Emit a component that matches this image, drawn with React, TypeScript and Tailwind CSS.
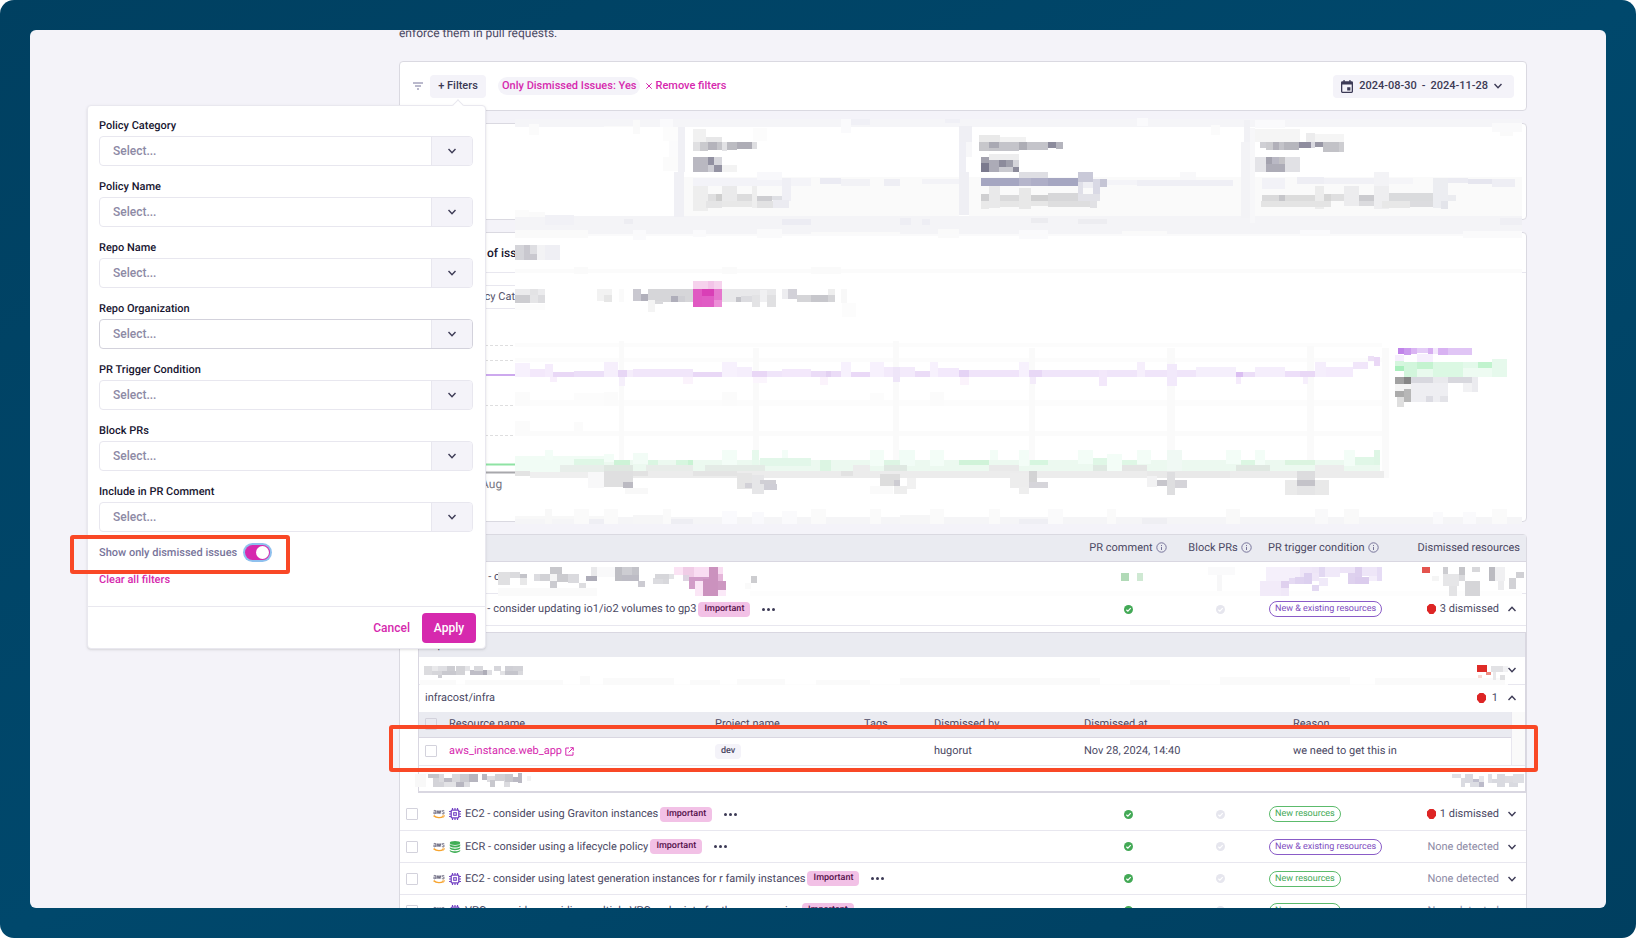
import { ReactNode } from 'react';
import { clsx } from 'clsx';

// x1, y1, x2, y2, fill
type Cell = [number, number, number, number, string];

const statCells: Cell[] = [
  [515, 119, 1522, 127, '#f5f5f8'], [529, 124, 539, 135, '#fbfbfb'], [604, 126, 633, 127, '#fafafa'], [633, 120, 640, 134, '#fafafa'],
  [660, 119, 673, 127, '#fafafc'], [663, 127, 678, 141, '#fcfcfc'], [669, 141, 678, 157, '#fbfbfc'], [663, 157, 678, 171, '#fbfbfb'],
  [851, 119, 870, 125, '#f0f0f6'], [841, 119, 851, 133, '#fafafc'], [945, 119, 960, 123, '#f0f0f6'], [1137, 118, 1148, 126, '#fafafc'],
  [1211, 125, 1220, 135, '#fbfbfb'], [1255, 120, 1285, 128, '#fafafc'], [1492, 123, 1522, 132, '#fafafb'], [1500, 132, 1513, 136, '#fafafa'],
  [684, 177, 959, 216, '#fafafa'], [969, 177, 1241, 216, '#fafafa'], [1255, 177, 1522, 216, '#fafafa'],
  [515, 216, 1522, 234, '#f4f4f7'], [515, 210, 529, 217, '#fbfbfb'], [529, 212, 545, 217, '#fafafa'], [545, 215, 574, 225, '#f1f1f6'],
  [624, 219, 633, 224, '#ededf2'], [782, 219, 811, 225, '#ececf3'], [900, 218, 911, 225, '#eeeef4'], [922, 219, 930, 225, '#eeeef4'],
  [1031, 218, 1048, 223, '#ececf0'], [1078, 219, 1107, 224, '#ededf1'], [1500, 218, 1522, 225, '#efeff4'],
  [515, 230, 588, 238, '#fafafa'], [633, 230, 646, 240, '#fafafc'], [693, 230, 706, 237, '#fafafc'], [757, 229, 782, 238, '#fafafb'],
  [811, 232, 900, 236, '#fafafa'], [938, 229, 959, 238, '#fafafa'], [1019, 230, 1048, 239, '#fafafc'], [1122, 231, 1167, 235, '#fafafa'],
  [1300, 230, 1330, 236, '#fafafc'], [1463, 231, 1522, 238, '#fafafb'], [588, 234, 1522, 236, '#fafafb'],
  [678, 127, 685, 172, '#f0f0f5'], [674, 172, 684, 217, '#f0f0f5'], [959, 126, 972, 142, '#efeff4'], [959, 142, 966, 172, '#efeff5'],
  [966, 142, 972, 157, '#f7f7f9'], [959, 172, 969, 215, '#efeff4'], [1244, 120, 1250, 142, '#f1f1f5'], [1241, 142, 1250, 218, '#f3f3f6'],
  [1250, 128, 1255, 223, '#f7f7f9'],
  [693, 129, 706, 142, '#f1f1f1'], [706, 137, 722, 142, '#e7e7e8'], [753, 128, 767, 141, '#fcfcfc'],
  [693, 142, 700, 151, '#e0e0e2'], [700, 142, 708, 151, '#cacace'], [708, 142, 717, 150, '#b4b3bb'], [717, 142, 722, 150, '#c5c5ca'],
  [722, 142, 727, 151, '#e2e2e5'], [727, 142, 737, 150, '#bcbcc2'], [737, 142, 752, 149, '#aeadb6'], [752, 142, 757, 149, '#dedee1'],
  [693, 157, 708, 172, '#b9b8c1'], [708, 157, 714, 165, '#9190a1'], [714, 157, 722, 165, '#d6d6dc'], [708, 165, 714, 172, '#cdcdd4'],
  [714, 165, 722, 172, '#9493a3'], [722, 165, 737, 172, '#f3f3f3'],
  [693, 178, 782, 186, '#f3f3f8'], [757, 172, 782, 180, '#f8f8fb'], [782, 178, 791, 201, '#efeff5'], [791, 178, 811, 186, '#f4f4f8'],
  [820, 178, 841, 184, '#ebebf3'], [841, 179, 870, 186, '#f2f2f6'], [884, 179, 900, 186, '#eeeef4'], [922, 179, 959, 184, '#f3f3f7'],
  [693, 186, 708, 211, '#eeeeee'], [708, 194, 716, 201, '#dfdfe0'], [716, 194, 722, 201, '#cecece'], [722, 186, 737, 201, '#eaeaeb'],
  [737, 194, 752, 201, '#dcdcdd'], [752, 186, 757, 208, '#eeeeee'], [757, 196, 772, 201, '#cdcdd1'], [772, 196, 782, 200, '#dedfe4'],
  [706, 201, 722, 208, '#e5e5e6'], [722, 201, 752, 207, '#e8e8e8'], [757, 201, 773, 208, '#e2e2e3'], [773, 200, 789, 208, '#ebebf1'],
  [979, 135, 1000, 142, '#e9e9e9'], [1000, 137, 1026, 142, '#f2f2f2'], [979, 142, 989, 151, '#c7c7cb'], [989, 142, 999, 148, '#a9a9b3'],
  [989, 148, 999, 151, '#c4c4c9'], [999, 142, 1019, 151, '#c4c4ca'], [1019, 142, 1027, 150, '#adadb5'], [1027, 142, 1048, 150, '#c4c4ca'],
  [1048, 142, 1056, 148, '#8c8b9c'], [1056, 142, 1063, 149, '#b4b4bd'],
  [989, 154, 1019, 160, '#ededee'], [981, 157, 989, 163, '#a3a2ae'], [981, 163, 989, 172, '#7b7a8e'], [989, 160, 999, 172, '#acabb7'],
  [999, 160, 1006, 167, '#8c8b9b'], [1006, 160, 1013, 167, '#9f9fab'], [999, 167, 1013, 172, '#cacad0'], [1013, 160, 1019, 167, '#d5d5da'],
  [1013, 167, 1019, 172, '#8b8a9a'], [1019, 172, 1048, 179, '#dedee3'],
  [981, 178, 1078, 186, '#a5a6c1'], [1019, 178, 1031, 186, '#b5b5cb'], [1031, 178, 1048, 186, '#aeaec7'], [1078, 172, 1093, 182, '#c9c9d8'],
  [1078, 182, 1083, 194, '#dfdfe8'], [1083, 182, 1093, 188, '#eeeef3'], [1093, 179, 1100, 194, '#d9d9e5'], [1100, 179, 1107, 187, '#c5c5d5'],
  [1107, 180, 1137, 185, '#f4f4f8'], [1137, 180, 1233, 186, '#efeff5'], [1180, 172, 1196, 180, '#f8f8fa'],
  [981, 194, 989, 201, '#cfcfd1'], [981, 201, 989, 209, '#e9e9e9'], [989, 186, 1000, 208, '#e9e9ea'], [1000, 195, 1019, 201, '#dadadb'],
  [1000, 201, 1019, 207, '#e6e6e6'], [1019, 188, 1031, 209, '#e8e8e8'], [1031, 195, 1048, 201, '#d0d0d1'], [1031, 201, 1048, 206, '#e6e6e6'],
  [1048, 193, 1078, 201, '#d7d7d9'], [1048, 201, 1090, 207, '#dededf'], [1078, 194, 1100, 201, '#e2e2e8'], [1090, 201, 1097, 208, '#e1e1e5'],
  [1255, 129, 1300, 142, '#f5f5f5'], [1306, 133, 1315, 142, '#ececed'], [1315, 134, 1344, 142, '#f5f5f5'],
  [1260, 142, 1266, 148, '#cfcfd4'], [1266, 142, 1273, 150, '#cbcbcf'], [1273, 142, 1279, 150, '#b1b0b9'], [1279, 142, 1284, 150, '#c3c3c9'],
  [1284, 142, 1299, 150, '#b6b6bd'], [1299, 142, 1311, 148, '#8f8d9f'], [1311, 142, 1315, 148, '#d8d8df'], [1315, 142, 1323, 147, '#9897a5'],
  [1323, 142, 1339, 152, '#c2c2c7'], [1339, 142, 1344, 152, '#cdcdd1'],
  [1255, 157, 1266, 172, '#e4e4e8'], [1266, 157, 1272, 164, '#a3a2ae'], [1272, 157, 1279, 164, '#b9b8c4'], [1279, 157, 1285, 164, '#c3c2c6'],
  [1266, 164, 1285, 172, '#adacb7'], [1285, 157, 1300, 172, '#e1e1e5'],
  [1262, 178, 1285, 189, '#f2f2f7'], [1297, 177, 1324, 184, '#eeeef4'], [1324, 178, 1374, 184, '#f1f1f6'], [1374, 172, 1389, 186, '#f3f3f6'],
  [1389, 178, 1413, 184, '#f5f5f8'], [1433, 178, 1448, 208, '#ecedf1'], [1448, 178, 1468, 183, '#ebebf2'], [1468, 179, 1492, 184, '#e6e6ef'],
  [1492, 179, 1515, 187, '#eeeef4'],
  [1262, 195, 1279, 201, '#dadadb'], [1279, 195, 1285, 201, '#c6c6ca'], [1285, 195, 1315, 201, '#dcdcdc'], [1315, 186, 1324, 209, '#ececec'],
  [1324, 194, 1331, 201, '#d6d6d6'], [1331, 194, 1344, 201, '#dfdfe0'], [1344, 186, 1359, 206, '#ececee'], [1359, 195, 1374, 201, '#cbcbcf'],
  [1359, 201, 1374, 206, '#dbdbde'], [1374, 186, 1389, 209, '#eeeef0'], [1389, 193, 1433, 201, '#dadbdd'], [1261, 201, 1331, 207, '#e4e4e4'],
  [1382, 201, 1410, 208, '#e8e8e8'], [1410, 201, 1433, 207, '#dcdcdf'], [1441, 201, 1448, 209, '#e3e4ea'], [1448, 195, 1456, 201, '#ebecf0'],
];

const chartCells: Cell[] = [
  [515, 245, 524, 260, '#d5d5da'], [524, 245, 530, 260, '#c9c8cf'], [530, 245, 537, 254, '#dedee2'], [530, 254, 537, 260, '#c9c8cf'],
  [537, 245, 545, 260, '#f3f3f5'], [545, 245, 560, 260, '#efeff4'],
  [515, 269, 1522, 273, '#fbfbfb'], [574, 267, 588, 274, '#fafafa'], [722, 267, 737, 274, '#fafafa'], [811, 267, 841, 274, '#fafafa'],
  [515, 289, 545, 296, '#ebebed'], [515, 295, 530, 303, '#cdcdd1'], [530, 289, 538, 295, '#e3e3e5'], [530, 295, 538, 303, '#e5e5e7'],
  [538, 295, 545, 303, '#dcdcdf'], [597, 289, 612, 301, '#f2f2f2'], [604, 295, 612, 302, '#e6e6e6'], [619, 289, 624, 302, '#fafafa'],
  [633, 289, 641, 301, '#c9c8d0'], [641, 294, 648, 301, '#b1b0bb'], [648, 289, 693, 302, '#d6d6d9'], [655, 301, 663, 304, '#d9d9dc'],
  [648, 300, 655, 312, '#f4f4f4'], [671, 296, 678, 302, '#afaeba'], [678, 296, 685, 302, '#cfcfd4'],
  [693, 281, 722, 289, '#f6d2ed'], [708, 281, 714, 289, '#f3c3e8'], [693, 289, 702, 307, '#e059c2'], [702, 289, 714, 296, '#d93fb6'],
  [702, 296, 714, 307, '#e05cc4'], [714, 289, 722, 300, '#e576cd'], [714, 300, 722, 307, '#ec8fd7'],
  [722, 289, 776, 302, '#e8e8ea'], [736, 297, 741, 302, '#c3c3c9'], [741, 296, 752, 302, '#dcdce0'], [752, 295, 760, 307, '#e3e3e5'],
  [760, 290, 767, 302, '#f0f0f2'], [767, 295, 776, 307, '#e0e0e2'], [782, 289, 788, 299, '#ededf0'], [788, 289, 797, 299, '#d2d1d8'],
  [797, 295, 835, 302, '#d5d5d8'], [811, 295, 828, 302, '#c7c7cc'], [828, 289, 835, 295, '#eeeeee'], [841, 289, 847, 303, '#f8f8f8'],
  [842, 303, 856, 317, '#fcfcfc'], [515, 304, 545, 310, '#fcfcfc'],
  [515, 343, 1382, 347, '#fcfcfc'], [515, 358, 1382, 362, '#fcfcfc'], [515, 400, 1382, 406, '#fcfcfc'], [515, 431, 1382, 436, '#fbfbfb'],
  [515, 392, 530, 406, '#fbfbfb'], [574, 393, 604, 406, '#fcfcfc'], [604, 392, 618, 406, '#fbfbfb'], [722, 392, 737, 406, '#fbfbfb'],
  [870, 393, 884, 406, '#fcfcfc'], [930, 392, 944, 406, '#fbfbfb'], [515, 421, 530, 436, '#fbfbfb'], [574, 422, 583, 436, '#fbfbfb'],
  [619, 341, 624, 465, '#fafafa'], [753, 348, 759, 465, '#fafafa'], [893, 341, 899, 465, '#fafafa'], [1029, 348, 1035, 465, '#fafafa'],
  [1167, 348, 1175, 465, '#fafafa'], [1307, 346, 1314, 465, '#fafafa'], [1382, 348, 1389, 478, '#fafafa'],
  [515, 363, 530, 377, '#f7f1fd'], [530, 369, 545, 377, '#f3e8fb'], [545, 364, 553, 377, '#f5ecfc'], [553, 372, 574, 377, '#e9d8f6'],
  [550, 377, 557, 382, '#f8effc'], [574, 371, 604, 377, '#ecdff8'], [604, 362, 618, 377, '#f6effc'], [618, 370, 627, 377, '#e7d6f5'],
  [619, 377, 625, 386, '#f5effb'], [627, 370, 633, 377, '#f5edfb'], [633, 369, 693, 377, '#f1e6fa'], [683, 377, 693, 384, '#fbf3fc'],
  [693, 372, 722, 377, '#e9d8f6'], [722, 362, 737, 377, '#f7f1fd'], [737, 367, 752, 377, '#f5eefc'], [752, 371, 767, 377, '#e9d7f6'],
  [753, 377, 767, 383, '#fbf5fd'], [767, 371, 782, 377, '#f0e5fa'], [782, 369, 811, 377, '#f3e8fb'], [811, 371, 841, 377, '#ebdcf7'],
  [826, 371, 831, 377, '#e3d1f2'], [820, 377, 828, 385, '#fbf3fc'], [841, 362, 851, 377, '#f7f1fd'], [851, 372, 870, 377, '#ead9f7'],
  [870, 362, 884, 377, '#f7f1fd'], [884, 367, 915, 377, '#f3eafb'], [893, 367, 900, 382, '#eee5f8'], [915, 371, 930, 377, '#ebdcf7'],
  [930, 362, 938, 377, '#f7f1fd'], [938, 368, 959, 377, '#f3e9fc'], [959, 370, 969, 377, '#e5d3f5'], [960, 377, 969, 385, '#fbf3fc'],
  [969, 370, 1019, 377, '#f0e4fa'], [1019, 362, 1029, 377, '#f7f1fd'], [1029, 370, 1042, 377, '#e8d8f6'], [1030, 377, 1036, 384, '#f3ebfa'],
  [1042, 370, 1137, 377, '#f0e5fa'], [1099, 370, 1107, 386, '#f3e8fb'], [1137, 362, 1145, 377, '#f6effc'], [1145, 370, 1196, 377, '#f0e5fa'],
  [1167, 364, 1177, 386, '#f2e9fb'], [1196, 367, 1236, 377, '#f5effc'], [1236, 372, 1243, 377, '#dbbff2'], [1236, 377, 1241, 384, '#f5ebfc'],
  [1243, 372, 1255, 377, '#ecdef8'], [1255, 367, 1285, 377, '#f5eefc'], [1285, 371, 1300, 377, '#eddff9'], [1300, 371, 1315, 377, '#e9d8f6'],
  [1303, 377, 1308, 384, '#f6effc'], [1315, 362, 1326, 377, '#f5eefc'], [1326, 367, 1353, 377, '#f4ebfc'], [1353, 362, 1368, 369, '#f1e6fa'],
  [1368, 356, 1374, 361, '#ecdff6'], [1374, 357, 1380, 366, '#ead8f6'],
  [515, 456, 604, 472, '#f1fcf5'], [604, 460, 1380, 472, '#ecf9f0'], [545, 450, 553, 460, '#f3fdf7'], [604, 454, 614, 462, '#f3fdf7'],
  [633, 453, 648, 464, '#f2fcf6'], [722, 450, 737, 466, '#f3fdf7'], [752, 450, 759, 472, '#e7f9ed'], [782, 450, 788, 460, '#f3fdf7'],
  [870, 450, 884, 466, '#f3fdf7'], [899, 450, 915, 466, '#f1fcf6'], [930, 450, 944, 466, '#f3fdf7'], [990, 450, 998, 460, '#f3fdf7'],
  [1019, 450, 1029, 466, '#f3fdf7'], [1078, 450, 1093, 464, '#f3fdf7'], [1107, 454, 1122, 472, '#f3fdf7'], [1137, 450, 1151, 464, '#f3fdf7'],
  [1167, 450, 1182, 472, '#f0f9f4'], [1226, 450, 1241, 464, '#f3fdf7'], [1255, 450, 1265, 466, '#f3fdf7'], [1344, 450, 1355, 466, '#f3fdf7'],
  [574, 459, 604, 465, '#dff7e6'], [614, 460, 630, 465, '#cdf3d7'], [648, 460, 658, 465, '#daf6e2'], [676, 460, 693, 465, '#d6f6df'],
  [688, 460, 693, 471, '#c8f3d3'], [760, 458, 811, 466, '#e2f7e9'], [820, 460, 831, 471, '#dcf5e3'], [884, 460, 900, 466, '#ddf5e4'],
  [959, 460, 989, 465, '#d0f3d9'], [1030, 460, 1048, 465, '#d6f6df'], [1093, 458, 1107, 465, '#dff7e6'], [1122, 460, 1137, 465, '#def7e5'],
  [1241, 460, 1255, 465, '#dcf7e3'], [1285, 460, 1315, 465, '#dbf4e0'], [1355, 457, 1380, 465, '#e0f7e7'], [1374, 450, 1380, 465, '#def6e5'],
  [560, 465, 604, 472, '#e8eeea'], [604, 465, 633, 472, '#dfe7e1'], [646, 465, 693, 472, '#e8ece9'], [705, 465, 765, 472, '#e4ebe6'],
  [853, 465, 870, 472, '#ececec'], [884, 465, 907, 472, '#dfe8e2'], [989, 465, 1019, 472, '#e9e9e9'], [1093, 465, 1107, 472, '#dfe9e2'],
  [1122, 465, 1147, 472, '#e4e5e4'], [1236, 465, 1270, 472, '#e0e8e2'], [1315, 465, 1344, 472, '#ececec'],
  [515, 471, 530, 476, '#e3e3e3'], [530, 472, 604, 478, '#efefef'], [604, 471, 1384, 478, '#ececec'], [633, 471, 648, 476, '#e2e2e2'],
  [693, 471, 737, 476, '#e4e4e4'], [841, 471, 853, 476, '#e2e2e2'], [1147, 471, 1230, 478, '#e9e9e9'],
  [588, 472, 604, 488, '#f8f8f9'], [604, 471, 633, 487, '#dfdfe0'], [623, 482, 633, 488, '#bbbac2'], [625, 488, 648, 494, '#f8f8f8'],
  [737, 473, 752, 489, '#e5e5e5'], [745, 483, 752, 488, '#d2d1d7'], [752, 475, 764, 494, '#e6e6e8'], [760, 480, 776, 484, '#d0cfd5'],
  [764, 484, 777, 490, '#cfced6'], [880, 474, 900, 486, '#dddddd'], [894, 480, 900, 486, '#cdccd2'], [894, 486, 907, 494, '#eeeeee'],
  [907, 478, 916, 489, '#f1f1f1'], [870, 486, 893, 494, '#fafafa'], [1010, 473, 1029, 488, '#ededed'], [1029, 471, 1037, 482, '#d3d3d4'],
  [1029, 482, 1048, 488, '#d6d5da'], [1019, 487, 1029, 494, '#eeeeee'], [1147, 476, 1157, 487, '#f2f2f3'], [1157, 480, 1167, 486, '#c7c6cc'],
  [1167, 472, 1175, 495, '#dedee0'], [1175, 480, 1187, 488, '#d5d4d9'], [1285, 480, 1297, 495, '#eaeaea'], [1297, 471, 1315, 480, '#dcdcde'],
  [1297, 480, 1315, 486, '#c4c3c9'], [1297, 486, 1315, 495, '#e5e5e6'], [1315, 480, 1329, 495, '#e9e9e9'],
  [515, 517, 1522, 524, '#f5f5f7'], [515, 516, 604, 519, '#f8f8f8'], [545, 509, 552, 524, '#f8f8f8'], [574, 509, 589, 524, '#fafafa'],
  [589, 519, 604, 524, '#efeff4'], [604, 509, 618, 524, '#fafafa'], [633, 515, 663, 524, '#f6f6f7'], [663, 509, 671, 524, '#fafafa'],
  [671, 519, 693, 524, '#eeeef3'], [722, 511, 737, 524, '#fafafd'], [752, 512, 764, 524, '#f9f9fc'], [782, 511, 797, 524, '#fafafc'],
  [811, 509, 826, 524, '#fafafa'], [870, 509, 881, 524, '#fafafa'], [900, 515, 930, 524, '#f6f6f7'], [930, 509, 944, 524, '#fafafa'],
  [989, 509, 1000, 524, '#fafafa'], [1019, 519, 1048, 524, '#efeff4'], [1048, 509, 1063, 524, '#fafafb'], [1107, 509, 1116, 524, '#fafafa'],
  [1142, 518, 1167, 524, '#efeff3'], [1226, 509, 1240, 524, '#f9f9f9'], [1315, 509, 1328, 524, '#f9f9fa'], [1344, 509, 1359, 524, '#f9f9f9'],
  [1433, 512, 1443, 524, '#fafafc'], [1463, 512, 1476, 524, '#fafafc'], [1492, 509, 1507, 524, '#fafafa'],
  [1398, 348, 1404, 354, '#c084ea'], [1404, 348, 1411, 355, '#cb9aee'], [1411, 348, 1417, 354, '#dab5f3'], [1417, 348, 1433, 353, '#e4ccf7'],
  [1428, 348, 1433, 354, '#d6aef1'], [1433, 348, 1438, 354, '#f3e8fc'], [1438, 348, 1448, 355, '#d8b2f2'], [1448, 348, 1472, 355, '#e0c5f5'],
  [1395, 355, 1404, 361, '#f6effd'], [1417, 354, 1433, 362, '#f6effd'],
  [1395, 361, 1404, 366, '#d5f6de'], [1395, 366, 1404, 371, '#a9efbd'], [1404, 362, 1417, 377, '#d2f6dc'], [1417, 362, 1433, 369, '#c4f3d0'],
  [1417, 369, 1433, 377, '#e9faee'], [1433, 362, 1463, 377, '#dbf8e3'], [1463, 368, 1492, 377, '#eefbf2'], [1463, 362, 1478, 368, '#e3f9ea'],
  [1478, 362, 1492, 368, '#c1f3ce'], [1492, 359, 1507, 377, '#e6f9ec'],
  [1395, 377, 1404, 384, '#a1a1a1'], [1404, 377, 1411, 384, '#868686'], [1411, 377, 1433, 383, '#d8d8df'], [1433, 377, 1448, 383, '#e9e9ed'],
  [1448, 377, 1472, 383, '#d8d8de'], [1472, 377, 1478, 392, '#ebebef'], [1395, 384, 1411, 391, '#f4f4f4'], [1395, 391, 1404, 397, '#ababab'],
  [1404, 389, 1411, 402, '#b7b7b7'], [1397, 397, 1404, 407, '#dfdfdf'], [1411, 383, 1448, 402, '#eeeef2'], [1426, 396, 1433, 402, '#dcdce3'],
  [1440, 396, 1448, 402, '#e3e3e8'], [1463, 383, 1472, 392, '#f2f2f4'],
];

const policyCells: Cell[] = [
  [498, 566, 750, 597, '#ffffff'],
  [498, 572, 510, 586, '#e0e0e2'], [510, 572, 520, 579, '#dbdbde'], [520, 574, 527, 579, '#c4c4ca'], [520, 579, 527, 586, '#e8e8e9'],
  [534, 574, 540, 582, '#dcdce0'], [540, 574, 550, 582, '#d2d2d6'], [550, 567, 562, 574, '#c8c8cc'], [557, 574, 568, 583, '#cbcbcf'],
  [550, 582, 557, 589, '#cbcbd0'], [568, 574, 579, 584, '#dadade'], [550, 574, 557, 582, '#f5f5f5'], [579, 584, 586, 589, '#dddde0'],
  [586, 576, 597, 582, '#aeadb9'], [591, 567, 597, 576, '#e9e9eb'], [597, 567, 615, 577, '#f9f9fa'], [615, 567, 622, 582, '#bebec4'],
  [622, 567, 632, 575, '#cdcdd2'], [622, 575, 639, 582, '#bdbcc5'], [632, 567, 639, 575, '#c3c3c9'], [638, 582, 645, 588, '#cccbd2'],
  [653, 579, 663, 585, '#dcdce0'], [655, 574, 669, 580, '#d6d6da'], [663, 580, 669, 585, '#d8d8dc'], [669, 574, 674, 580, '#e3e3e6'],
  [498, 589, 597, 597, '#fafafa'], [674, 567, 683, 575, '#fbe3f4'], [683, 567, 694, 577, '#f0cce6'], [683, 575, 689, 582, '#ded3e1'],
  [694, 567, 709, 577, '#f9ddf2'], [709, 567, 718, 597, '#cb92be'], [689, 577, 709, 582, '#d19cc8'], [689, 582, 695, 590, '#d29dc8'],
  [695, 582, 703, 597, '#fbe6f6'], [703, 580, 709, 597, '#cb92be'], [718, 567, 723, 574, '#f9ddf2'], [718, 574, 723, 582, '#e5b6da'],
  [718, 582, 726, 591, '#cd97c1'], [718, 591, 726, 597, '#fbe9f8'], [751, 576, 757, 584, '#cdcdd0'], [745, 584, 751, 590, '#fafafa'],
  [750, 592, 1522, 597, '#fdfdfd'],
  [1121, 573, 1129, 582, '#b1dab7'], [1137, 573, 1143, 582, '#cfe9d3'], [1208, 567, 1235, 575, '#fafafb'], [1217, 575, 1222, 592, '#f7f7f8'],
  [1266, 567, 1300, 582, '#f5f0fb'], [1260, 582, 1281, 597, '#f2ebf9'], [1300, 567, 1319, 582, '#efe7f8'], [1281, 582, 1289, 589, '#dfd0ee'],
  [1281, 589, 1289, 597, '#f0e8f8'], [1295, 577, 1304, 585, '#dfd3f0'], [1304, 573, 1312, 585, '#dcd0ef'], [1289, 579, 1295, 585, '#e5daf3'],
  [1312, 586, 1319, 592, '#e3d9f2'], [1312, 567, 1319, 573, '#ede5f7'], [1319, 567, 1325, 577, '#e2d8f2'], [1319, 579, 1328, 587, '#f0eaf9'],
  [1325, 567, 1340, 577, '#f0e9f9'], [1340, 567, 1355, 573, '#ede4f7'], [1355, 567, 1362, 577, '#ddcfee'], [1348, 573, 1355, 585, '#ded1ee'],
  [1355, 577, 1369, 585, '#dbcced'], [1362, 567, 1377, 576, '#eee6f8'], [1369, 576, 1377, 582, '#f4eefb'], [1377, 567, 1382, 582, '#e6dcf5'],
  [1422, 567, 1430, 573, '#e4544e'], [1432, 576, 1439, 582, '#f5f5f5'], [1443, 567, 1448, 574, '#cdcdd1'], [1443, 574, 1459, 587, '#e6e6e8'],
  [1459, 567, 1465, 575, '#c5c5c9'], [1459, 575, 1465, 582, '#dadadd'], [1449, 587, 1457, 597, '#e3e3e5'], [1465, 582, 1480, 597, '#d5d5d8'],
  [1472, 567, 1480, 572, '#d8d8db'], [1489, 567, 1495, 582, '#bbbbc1'], [1495, 567, 1505, 582, '#f0f0f2'], [1498, 582, 1504, 591, '#ececee'],
  [1509, 579, 1516, 590, '#d2d2d6'], [1516, 572, 1524, 579, '#d0d0d4'],
];

const repoCells: Cell[] = [
  [424, 666, 432, 675, '#dcdcdf'], [432, 666, 438, 671, '#e9e9eb'], [432, 671, 442, 675, '#d6d6da'], [438, 675, 442, 678, '#cfcfd4'],
  [438, 666, 447, 671, '#dfdfe3'], [442, 671, 456, 675, '#c9c9cf'], [447, 666, 455, 671, '#cdcdd2'], [456, 666, 465, 675, '#d3d3d7'],
  [465, 666, 470, 671, '#e4e4e7'], [470, 670, 483, 675, '#bfbec7'], [474, 666, 483, 671, '#d8d8dc'], [483, 670, 487, 675, '#aeadb8'],
  [487, 670, 492, 675, '#dfdfe3'], [494, 666, 501, 671, '#d6d6db'], [500, 671, 505, 675, '#e3e3e6'], [505, 666, 513, 671, '#cfcfd5'],
  [505, 671, 518, 675, '#c5c5cc'], [513, 666, 523, 671, '#d2d2d7'], [518, 671, 523, 675, '#d9d9dd'],
  [420, 684, 1508, 685, '#fdfdfd'],
  [420, 680, 456, 685, '#fafafa'], [465, 680, 563, 685, '#fafafa'], [580, 676, 590, 685, '#fafafa'], [603, 678, 674, 685, '#fafafa'],
  [690, 680, 720, 685, '#fafafa'], [737, 679, 785, 685, '#fafafa'], [816, 680, 870, 685, '#fafafa'], [900, 678, 1100, 685, '#fafafa'],
  [1130, 680, 1170, 685, '#fafafa'], [1220, 677, 1350, 685, '#fafafa'], [1375, 678, 1505, 685, '#fafafa'],
  [1477, 665, 1487, 672, '#df2c28'], [1486, 672, 1491, 675, '#ef8d82'], [1478, 675, 1482, 678, '#f9d9d3'], [1491, 666, 1503, 672, '#e2e2e5'],
  [1493, 672, 1496, 680, '#e8e8ea'], [1503, 666, 1508, 672, '#f2f2f4'], [1500, 675, 1505, 680, '#e0e0e2'],
];

const nextRepoCells: Cell[] = [
  [415, 774, 426, 787, '#f8f8f8'], [428, 774, 439, 778, '#c5c5cb'], [433, 778, 444, 787, '#d3d3d8'], [439, 774, 444, 782, '#dbdbdf'],
  [444, 778, 452, 782, '#bcbbc4'], [444, 782, 456, 787, '#e2e2e5'], [452, 774, 460, 782, '#d8d8dc'], [456, 782, 464, 787, '#b7b6c0'],
  [460, 774, 469, 782, '#cacad0'], [469, 774, 478, 782, '#b6b5bf'], [464, 782, 470, 787, '#dcdce0'], [482, 774, 487, 780, '#b8b7c1'],
  [487, 776, 495, 782, '#dddde1'], [490, 780, 495, 787, '#c8c8ce'], [495, 774, 505, 781, '#d0d0d5'], [504, 780, 510, 787, '#dbdbdf'],
  [505, 774, 513, 782, '#c7c7cd'], [513, 777, 518, 782, '#bbbac4'], [518, 773, 522, 783, '#bab9c3'], [527, 776, 531, 781, '#f3f3f4'],
  [1452, 774, 1461, 778, '#e0e0e5'], [1461, 778, 1465, 787, '#dadbe1'], [1465, 774, 1473, 783, '#d8d9e0'], [1473, 779, 1479, 782, '#bfbfce'],
  [1470, 782, 1479, 787, '#dcdde3'], [1479, 782, 1484, 787, '#bcbbca'], [1479, 776, 1484, 782, '#e4e5ea'], [1488, 774, 1492, 783, '#dedfe5'],
  [1492, 779, 1497, 783, '#d8d9df'], [1497, 774, 1505, 787, '#d9dae0'], [1505, 776, 1513, 783, '#dddde2'], [1509, 782, 1518, 787, '#d9dae0'],
  [1513, 774, 1524, 783, '#dedfe4'],
];

function Mosaic({ cells, viewBox }: { cells: Cell[]; viewBox: string }) {
  return (
    <svg
      aria-hidden="true"
      className="absolute inset-0 w-full h-full overflow-visible pointer-events-none"
      viewBox={viewBox}
      preserveAspectRatio="none"
      shapeRendering="crispEdges"
    >
      {cells.map(([x1, y1, x2, y2, fill], i) => (
        <rect key={i} x={x1} y={y1} width={x2 - x1} height={y2 - y1} fill={fill} />
      ))}
    </svg>
  );
}

function Chevron({ up = false }: { up?: boolean }) {
  return (
    <svg className="w-2 h-2 shrink-0" viewBox="0 0 8 8" fill="none" stroke="#3c3a55" strokeWidth="1.4">
      <path d={up ? 'M0.5 6 L4 2.2 L7.5 6' : 'M0.5 2 L4 5.8 L7.5 2'} />
    </svg>
  );
}

function InfoIcon() {
  return (
    <svg className="w-[11px] h-[11px] shrink-0" viewBox="0 0 11 11" fill="none" stroke="#77749a">
      <circle cx="5.5" cy="5.5" r="4.7" strokeWidth="1" />
      <path d="M5.5 4.9V8M5.5 3V4" strokeWidth="1" />
    </svg>
  );
}

function CheckIcon({ on }: { on: boolean }) {
  return (
    <svg className="w-[9px] h-[9px] block mx-auto" viewBox="0 0 9 9">
      <circle cx="4.5" cy="4.5" r="4.5" fill={on ? '#43a956' : '#e6e6ee'} />
      <path d="M2.4 4.7 L3.9 6.1 L6.7 3.2" fill="none" stroke="#fff" strokeWidth="1.2" />
    </svg>
  );
}

function StopIcon() {
  return (
    <svg className="w-[9px] h-[10px] shrink-0" viewBox="0 0 9 10">
      <path d="M2.6 0H6.4L9 2.6V6.8L6.4 10H2.6L0 6.8V2.6Z" fill="#dd2525" />
    </svg>
  );
}

function AwsIcon() {
  return (
    <svg className="w-3 h-3 shrink-0" viewBox="0 0 12 12" fill="none">
      <path d="M0.6 2.9C1.2 2.2 3 2.1 3 3.4V6M3 4C1.8 3.9 0.5 4.200 0.6 5.1C0.8 6.2 2.4 5.9 3 4.8" stroke="#6b6980" strokeWidth="1" />
      <path d="M4.1 2.3L5 5.7L6 2.6L6.9 5.7L7.9 2.3" stroke="#6b6980" strokeWidth="1" />
      <path d="M11.3 2.8C10.4 2.2 9 2.4 9.1 3.3C9.3 4.2 11.4 3.900 11.4 5C11.2 6.100 9.6 6 8.800 5.3" stroke="#6b6980" strokeWidth="1" />
      <path d="M0.6 7.6C3.6 10.1 7.8 10.1 10.6 8.3" stroke="#f7a531" strokeWidth="1.5" />
      <path d="M9.4 7.4C10.3 7 11.6 7 11.4 7.5C11.3 8.3 11 8.900 10.6 9.4" stroke="#f7a531" strokeWidth="0.8" />
    </svg>
  );
}

function ChipIcon() {
  return (
    <svg className="w-3 h-3 shrink-0" viewBox="0 0 12 12" fill="none" stroke="#7444c4">
      <path d="M3.5 0V2M6 0V2M8.5 0V2M3.5 10V12M6 10V12M8.5 10V12M0 3.5H2M0 6H2M0 8.5H2M10 3.5H12M10 6H12M10 8.5H12" strokeWidth="1.2" />
      <rect x="2.2" y="2.2" width="7.6" height="7.6" rx="0.8" strokeWidth="1.3" />
      <rect x="4.700" y="4.700" width="2.6" height="2.6" strokeWidth="1.1" />
    </svg>
  );
}

function DatabaseIcon() {
  return (
    <svg className="w-3 h-3 shrink-0" viewBox="0 0 12 12" fill="#3fae55">
      <ellipse cx="6" cy="2" rx="5.2" ry="1.9" />
      <path d="M0.8 3.2C2.4 5.1 9.6 5.1 11.2 3.2V4.9C9.8 7 2.2 7 0.8 4.9Z" />
      <path d="M0.8 6.2C2.4 8.1 9.6 8.1 11.2 6.2V7.6C9.8 9.7 2.2 9.7 0.8 7.6Z" />
      <path d="M0.8 8.9C2.4 10.7 9.6 10.7 11.2 8.9V10.1C9.8 12.5 2.2 12.5 0.8 10.1Z" />
    </svg>
  );
}

function Check({ label }: { label: string }) {
  return (
    <input
      type="checkbox"
      aria-label={label}
      className="block appearance-none w-3 h-3 shrink-0 rounded-[1px] border border-[#d3d2dc]"
    />
  );
}

function SelectField({ label, active }: { label: string; active?: boolean }) {
  const id = label.toLowerCase().replace(/ /g, '-');
  return (
    <div className="mb-[13px]">
      <label htmlFor={id} className="block mb-0.5 text-[11px] leading-4 font-medium text-[#17152f]">{label}</label>
      <div className="relative h-[30px]">
        <select
          id={id}
          className={clsx(
            'w-full h-full appearance-none rounded border bg-white pl-[13px] text-xs text-[#8d8aa5]',
            active ? 'border-[#d3d2dc]' : 'border-[#e8e7ef]'
          )}
        >
          <option>Select...</option>
        </select>
        <span className="absolute inset-y-px right-px w-[41px] flex items-center justify-center rounded-r-[3px] border-l border-[#e8e7ef] bg-[#f4f3f9] pointer-events-none">
          <Chevron />
        </span>
      </div>
    </div>
  );
}

function FilterPopover() {
  return (
    <div className="absolute z-20 top-full right-0 mt-[7px] w-[399px] rounded border border-[#e9e8ef] bg-white shadow-sm">
      <span className="absolute -top-[5px] right-[23px] w-2 h-2 rotate-45 border-t border-l border-[#e9e8ef] bg-white" />
      <div className="pl-[11px] pr-3 pt-3 pb-[18px]">
        <SelectField label="Policy Category" />
        <SelectField label="Policy Name" />
        <SelectField label="Repo Name" />
        <SelectField label="Repo Organization" active />
        <SelectField label="PR Trigger Condition" />
        <SelectField label="Block PRs" />
        <SelectField label="Include in PR Comment" />
        <div className="relative -mt-px h-[18px] flex items-center gap-2">
          <label htmlFor="only-dismissed" className="text-[11px] leading-4 text-[#77749a]">Show only dismissed issues</label>
          <input
            id="only-dismissed"
            type="checkbox"
            role="switch"
            defaultChecked
            className="appearance-none w-[25px] h-[15px] rounded-full bg-[#d629ae] p-px ring-2 ring-[#8fc1ee] before:block before:w-[13px] before:h-[13px] before:ml-auto before:rounded-full before:bg-white"
          />
          <span className="absolute -left-[29px] -top-[9px] w-[220px] h-[39px] rounded-[3px] border-4 border-[#f94826] pointer-events-none" />
        </div>
        <a href="#" className="block w-fit mt-[10px] text-[11px] leading-4 text-[#d629ae]">Clear all filters</a>
      </div>
      <div className="flex items-center justify-end gap-3 border-t border-[#e9e8ef] pt-1.5 pb-[5px] pr-[9px]">
        <button className="text-xs font-medium text-[#d629ae]">Cancel</button>
        <button className="h-[30px] w-[54px] rounded bg-[#d629ae] text-xs font-medium text-white">Apply</button>
      </div>
    </div>
  );
}

function FilterBar() {
  return (
    <div className="flex items-center rounded border border-[#dad9e1] bg-white h-[50px] pl-[13px] pr-3 mb-3 text-[11px] font-medium">
      <svg className="w-[10px] h-2 mr-[7px]" viewBox="0 0 10 8" stroke="#77749a">
        <path d="M0 1H10M2 4H8M4 7H6" />
      </svg>
      <div className="relative">
        <button className="h-[23px] w-[56px] rounded bg-[#f4f3f9] text-[#3c3a55]">+ Filters</button>
        <FilterPopover />
      </div>
      <span className="ml-3 rounded-full bg-[#f4f3f9] px-1 h-[18px] leading-[18px] text-[#d629ae]">Only Dismissed Issues: Yes</span>
      <button className="ml-1.5 flex items-center gap-[3px] text-[#d629ae]">
        <svg className="w-1.5 h-1.5" viewBox="0 0 6 6" stroke="#d629ae"><path d="M0.3 0.3L5.7 5.7M5.7 0.3L0.3 5.7" /></svg>
        Remove filters
      </button>
      <button className="ml-auto flex items-center h-[23px] rounded bg-[#f4f3f9] pl-2 pr-3 text-[#3c3a55]">
        <svg className="w-3 h-[13px] mr-1.5" viewBox="0 0 12 13" fill="#3c3a55">
          <path fillRule="evenodd" d="M2.4 0H3.7V1.2H8.3V0H9.6V1.2H10.6Q12 1.2 12 2.6V11.6Q12 13 10.6 13H1.4Q0 13 0 11.6V2.6Q0 1.2 1.4 1.2H2.4ZM1.3 4.4V11.7H10.7V4.4ZM6.2 7.2H9.4V10.4H6.2Z" />
        </svg>
        <span>2024-08-30</span>
        <span className="mx-[5px]">-</span>
        <span className="mr-1.5">2024-11-28</span>
        <Chevron />
      </button>
    </div>
  );
}

function Charts() {
  return (
    <div className="relative mb-3">
      <div className="h-[97px] rounded border border-[#dad9e1] bg-white mb-3" />
      <div className="h-[290px] rounded border border-[#dad9e1] bg-white">
        <h2 className="flex items-center h-10 pl-[13px] border-b border-[#e8e7ef] text-xs font-medium text-[#17152f] whitespace-nowrap">
          Total number of iss
        </h2>
        <div className="mt-3 ml-[62px] w-[53px] h-6 border-y border-[#e8e7ef] flex items-center justify-end text-[11px] text-[#55536b] whitespace-nowrap">
          Policy Cat
        </div>
        <svg className="block mt-6 w-full h-[160px]" viewBox="400 333 1126 160" preserveAspectRatio="none">
          <path d="M430 345.500H515M430 360.500H515M430 405.500H515M430 435.500H515" stroke="#dededf" strokeDasharray="3 2" />
          <path d="M430 375H515" stroke="#cda9ee" strokeWidth="2" />
          <path d="M430 464.500H515" stroke="#8fe3a4" strokeWidth="2" />
          <path d="M430 472.500H515" stroke="#a8a8ac" strokeWidth="2" />
          <text x="481" y="488" fontSize="12" fill="#77767f">Aug</text>
        </svg>
      </div>
      <Mosaic cells={[...statCells, ...chartCells]} viewBox="399 123 1128 399" />
    </div>
  );
}

interface Policy {
  name: string;
  icon: 'chip' | 'database';
  scope: 'new' | 'all';
  dismissed: number;
  open?: boolean;
}

const policies: Policy[] = [
  { name: 'EBS - consider updating io1/io2 volumes to gp3', icon: 'database', scope: 'all', dismissed: 3, open: true },
  { name: 'EC2 - consider using Graviton instances', icon: 'chip', scope: 'new', dismissed: 1 },
  { name: 'ECR - consider using a lifecycle policy', icon: 'database', scope: 'all', dismissed: 0 },
  { name: 'EC2 - consider using latest generation instances for r family instances', icon: 'chip', scope: 'new', dismissed: 0 },
  { name: 'VPC - consider providing multiple VPC endpoints for the same region', icon: 'chip', scope: 'new', dismissed: 0 },
];

function PolicyRow({ policy }: { policy: Policy }) {
  return (
    <tr className="h-8 border-b border-[#e8e7ef]">
      <td className="pl-1.5">
        <div className="flex items-center whitespace-nowrap">
          <Check label={policy.name} />
          <span className="flex items-center gap-1 ml-[15px] mr-1">
            <AwsIcon />
            {policy.icon === 'chip' ? <ChipIcon /> : <DatabaseIcon />}
          </span>
          {policy.name}
          <span className="ml-0.5 w-[52px] text-center h-[15px] leading-[15px] rounded bg-[#f2c1e6] text-[9px] font-medium text-[#55104a]">Important</span>
          <button aria-label="More" className="ml-3 flex gap-0.5">
            <i className="w-[3px] h-[3px] rounded-full bg-[#3c3a55]" />
            <i className="w-[3px] h-[3px] rounded-full bg-[#3c3a55]" />
            <i className="w-[3px] h-[3px] rounded-full bg-[#3c3a55]" />
          </button>
        </div>
      </td>
      <td><CheckIcon on /></td>
      <td><CheckIcon on={false} /></td>
      <td className="pl-1">
        <span
          className={clsx(
            'block w-fit px-[5px] h-4 leading-[14px] rounded-full border text-[9px] whitespace-nowrap',
            policy.scope === 'new' ? 'border-[#5cbb6c] text-[#43a956]' : 'border-[#8a5cc7] text-[#7e4cc0]'
          )}
        >
          {policy.scope === 'new' ? 'New resources' : 'New & existing resources'}
        </span>
      </td>
      <td className="pr-2.5">
        <div className="flex items-center justify-end">
          {policy.dismissed > 0 && <StopIcon />}
          <span className={clsx('ml-1 mr-[9px]', policy.dismissed === 0 && 'text-[#8d8aa5]')}>
            {policy.dismissed > 0 ? `${policy.dismissed} dismissed` : 'None detected'}
          </span>
          <Chevron up={policy.open} />
        </div>
      </td>
    </tr>
  );
}

function DismissedDetails() {
  return (
    <div className="ml-[18px] my-1.5 border border-b-2 border-[#d9d7e1]">
      <div className="h-6 pl-1.5 leading-6 bg-[#eaebf1]">Repo name</div>
      <div className="relative h-7 border-b border-[#e8e7ef] flex items-center justify-end pr-[9px]">
        <Chevron />
        <Mosaic cells={repoCells} viewBox="419 657 1106 27" />
      </div>
      <div className="h-[27px] flex items-center pl-1.5 pr-[9px]">
        <span className="mr-auto">infracost/infra</span>
        <StopIcon />
        <span className="ml-1.5 mr-2.5">1</span>
        <Chevron up />
      </div>
      <div className="relative flex border-b border-[#e8e7ef]">
        <table className="flex-1 table-fixed border-collapse text-left">
          <colgroup>
            <col className="w-[30px]" />
            <col className="w-[266px]" />
            <col className="w-[149px]" />
            <col className="w-[70px]" />
            <col className="w-[150px]" />
            <col className="w-[209px]" />
            <col />
          </colgroup>
          <thead>
            <tr className="h-[26px] bg-[#eaebf1] border-b border-[#d9d7e1]">
              <th className="pl-1.5"><Check label="Select all resources" /></th>
              <th className="font-normal">Resource name</th>
              <th className="font-normal">Project name</th>
              <th className="font-normal">Tags</th>
              <th className="font-normal">Dismissed by</th>
              <th className="font-normal">Dismissed at</th>
              <th className="font-normal">Reason</th>
            </tr>
          </thead>
          <tbody>
            <tr className="h-[27px]">
              <td className="pl-1.5"><Check label="aws_instance.web_app" /></td>
              <td>
                <a href="#" className="flex items-center gap-[3px] text-[#d629ae]">
                  aws_instance.web_app
                  <svg className="w-[9px] h-[9px]" viewBox="0 0 9 9" fill="none" stroke="#d629ae">
                    <path d="M4 1H0.8V8.2H8V5M5.3 0.7H8.3V3.7M8.2 0.8L3.6 5.4" />
                  </svg>
                </a>
              </td>
              <td><span className="block w-fit px-1.5 h-[15px] leading-[15px] rounded bg-[#f4f3f9] text-[9px] font-medium">dev</span></td>
              <td />
              <td>hugorut</td>
              <td>Nov 28, 2024, 14:40</td>
              <td>we need to get this in</td>
            </tr>
          </tbody>
        </table>
        <div className="w-[14px] border-l border-[#e8e7ef] bg-[#fafafa]" />
        <span className="absolute -left-[30px] -right-[13px] top-[13px] h-[47px] rounded-[3px] border-4 border-[#f94826] pointer-events-none" />
      </div>
      <div className="relative h-[25px]">
        <Mosaic cells={nextRepoCells} viewBox="419 766 1106 25" />
      </div>
    </div>
  );
}

function HeaderCell({ children }: { children: ReactNode }) {
  return (
    <span className="inline-flex items-center gap-[3px] whitespace-nowrap">
      {children}
      <InfoIcon />
    </span>
  );
}

function PolicyTable() {
  return (
    <div className="rounded-t border border-[#dad9e1] bg-white">
      <table className="w-full table-fixed border-collapse text-[11px] leading-4 text-[#4a4863]">
        <colgroup>
          <col />
          <col className="w-[94px]" />
          <col className="w-[90px]" />
          <col className="w-[135px]" />
          <col className="w-[126px]" />
        </colgroup>
        <thead>
          <tr className="h-[26px] bg-[#eaebf1] border-b border-[#d9d7e1]">
            <th className="pl-[33px] text-left font-normal">Policy</th>
            <th className="font-normal"><HeaderCell>PR comment</HeaderCell></th>
            <th className="font-normal"><HeaderCell>Block PRs</HeaderCell></th>
            <th className="pl-[3px] text-left font-normal"><HeaderCell>PR trigger condition</HeaderCell></th>
            <th className="pr-1.5 text-right font-normal">Dismissed resources</th>
          </tr>
        </thead>
        <tbody>
          <tr className="h-8 border-b border-[#e8e7ef]">
            <td colSpan={5} className="relative pl-[66px]">
              EC2 - c
              <Mosaic cells={policyCells} viewBox="400 562 1126 32" />
            </td>
          </tr>
          <PolicyRow policy={policies[0]} />
          <tr>
            <td colSpan={5}><DismissedDetails /></td>
          </tr>
          {policies.slice(1).map(policy => <PolicyRow key={policy.name} policy={policy} />)}
        </tbody>
      </table>
    </div>
  );
}

export default function App() {
  return (
    <div className="h-screen rounded-[14px] bg-linear-to-br from-[#004061] via-[#00486c] to-[#003f60] p-[30px] font-['Roboto',sans-serif] [text-rendering:geometricPrecision]">
      <main className="h-full overflow-hidden rounded-md bg-[#f4f3f9] pl-[369px] pr-[79px]">
        <p className="-mt-[7px] mb-[18px] text-xs leading-5 text-[#4a4863]">enforce them in pull requests.</p>
        <FilterBar />
        <Charts />
        <PolicyTable />
      </main>
    </div>
  );
}
